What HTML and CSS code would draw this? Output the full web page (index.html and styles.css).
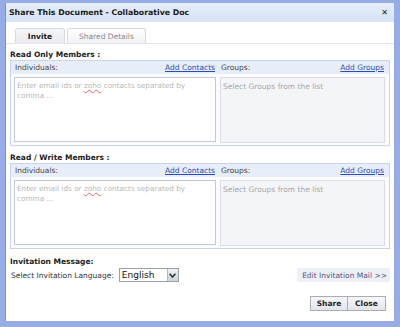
FILE: index.html
```html
<!DOCTYPE html>
<html>
<head>
<meta charset="utf-8">
<link rel="stylesheet" href="styles.css">
</head>
<body>
<div class="frame">
  <div class="dialog">
    <div class="titlebar">
      <span class="title">Share This Document - Collaborative Doc</span>
      <span class="close-x">✕</span>
    </div>
    <div class="tabs">
      <div class="tab active">Invite</div>
      <div class="tab">Shared Details</div>
    </div>
    <div class="content">
      <div class="section-title first">Read Only Members :</div>
      <div class="panel">
        <div class="col ind">
          <div class="head"><span>Individuals:</span><a class="link">Add Contacts</a></div>
          <div class="ta">
            <div>Enter email ids or <span class="sp">zoho</span> contacts separated by</div>
            <div>comma ...</div>
          </div>
        </div>
        <div class="col grp">
          <div class="head"><span>Groups:</span><a class="link">Add Groups</a></div>
          <div class="gbox">Select Groups from the list</div>
        </div>
      </div>

      <div class="section-title second">Read / Write Members :</div>
      <div class="panel">
        <div class="col ind">
          <div class="head"><span>Individuals:</span><a class="link">Add Contacts</a></div>
          <div class="ta">
            <div>Enter email ids or <span class="sp">zoho</span> contacts separated by</div>
            <div>comma ...</div>
          </div>
        </div>
        <div class="col grp">
          <div class="head"><span>Groups:</span><a class="link">Add Groups</a></div>
          <div class="gbox">Select Groups from the list</div>
        </div>
      </div>

      <div class="section-title third">Invitation Message:</div>
      <div class="lang-row">
        <div class="lang">
          <span>Select Invitation Language:</span>
          <div class="select"><span>English</span><span class="arrow"><svg width="7" height="5" viewBox="0 0 7 5"><path d="M0.6 0.8 L3.5 4 L6.4 0.8" fill="none" stroke="#333" stroke-width="1.6"/></svg></span></div>
        </div>
        <div class="edit-mail">Edit Invitation Mail &gt;&gt;</div>
      </div>
      <div class="buttons">
        <div class="btn">Share</div>
        <div class="btn">Close</div>
      </div>
    </div>
  </div>
</div>
</body>
</html>
```

FILE: styles.css
```css
* { box-sizing: border-box; }
html, body { margin: 0; padding: 0; }
body {
  width: 400px;
  height: 327px;
  background: #97abe6;
  font-family: "DejaVu Sans", Verdana, sans-serif;
  font-size: 7.5px;
  color: #222;
  overflow: hidden;
}
.frame {
  padding: 3px 6px 6px 5px;
  height: 327px;
}
.dialog {
  height: 318px;
  background: #fff;
  border-left: 1px solid #7d90cf;
  display: flex;
  flex-direction: column;
}
.titlebar {
  height: 19px;
  background: linear-gradient(#e6eefa, #d5e2f6);
  display: flex;
  align-items: center;
  justify-content: space-between;
  padding: 0 6px 0 3px;
}
.title {
  font-weight: bold;
  font-size: 7.8px;
  color: #1a1a1a;
}
.close-x {
  font-size: 8px;
  font-weight: bold;
  color: #222;
}
.tabs {
  display: flex;
  align-items: flex-end;
  height: 22px;
  padding-left: 9px;
  gap: 2px;
  border-bottom: 1px solid #e2e5ec;
}
.tab {
  height: 15px;
  padding: 0 11px;
  display: flex;
  align-items: center;
  border: 1px solid #d5d9e2;
  border-bottom: none;
  border-radius: 3px 3px 0 0;
  background: linear-gradient(#fff, #f1f2f5);
  color: #888;
}
.tab.active {
  width: 50px;
  justify-content: center;
  font-weight: bold;
  color: #222;
  background: linear-gradient(#f4f5f7, #e9ebef);
}
.content {
  padding: 0 4px 0 4px;
  display: flex;
  flex-direction: column;
}
.section-title {
  font-weight: bold;
  height: 8px;
  line-height: 8px;
  margin-bottom: 1px;
}
.section-title.first { margin-top: 7px; }
.section-title.second { margin-top: 8px; }
.section-title.third { margin-top: 9px; }
.panel {
  height: 86px;
  border: 1px solid #cbd4ea;
  display: flex;
  padding: 0 4px 3px 3px;
  gap: 4px;
  background: linear-gradient(#e8eef9 0, #e8eef9 13px, #fbfcfe 13px);
}
.col { display: flex; flex-direction: column; }
.ind { width: 202px; }
.grp { flex: 1; }
.head {
  height: 16px;
  display: flex;
  align-items: center;
  justify-content: space-between;
  padding: 0 1px 3px 1px;
  color: #444;
}
.link {
  color: #2a4cb8;
  text-decoration: underline;
}
.ta {
  flex: 1;
  background: #fff;
  border: 1px solid #c4c8d4;
  color: #b8b8b8;
  padding: 3px 2px;
  line-height: 10px;
  font-size: 7.3px;
}
.sp {
  text-decoration: underline wavy #d66;
  text-decoration-thickness: 0.5px;
}
.gbox {
  flex: 1;
  margin-bottom: -1px;
  background: #f4f5f9;
  border: 1px solid #dadde5;
  color: #a6a6a6;
  padding: 4px 2px;
}
.lang-row {
  display: flex;
  justify-content: space-between;
  align-items: center;
  margin-top: 1px;
}
.lang {
  display: flex;
  align-items: center;
  gap: 5px;
  color: #333;
  padding-left: 1px;
}
.select {
  width: 60px;
  height: 14px;
  border: 1px solid #9aa0ab;
  background: #fff;
  display: flex;
  align-items: center;
  justify-content: space-between;
  padding-left: 2px;
  font-size: 9px;
  color: #111;
}
.arrow {
  width: 11px;
  height: 12px;
  background: linear-gradient(#eef0f5, #cdd2dc);
  border-left: 1px solid #b0b6c2;
  display: flex;
  align-items: center;
  justify-content: center;
}
.edit-mail {
  height: 14px;
  display: flex;
  align-items: center;
  padding: 0 3px 0 5px;
  background: #eef0f7;
  color: #55557a;
}
.buttons {
  display: flex;
  justify-content: flex-end;
  margin-top: 14px;
  padding-right: 4px;
}
.btn {
  height: 15px;
  width: 38px;
  display: flex;
  align-items: center;
  justify-content: center;
  font-weight: bold;
  border: 1px solid #a8adb8;
  background: linear-gradient(#f8f8fa, #e2e4e9);
  color: #222;
}
.btn + .btn { border-left: none; }
```
